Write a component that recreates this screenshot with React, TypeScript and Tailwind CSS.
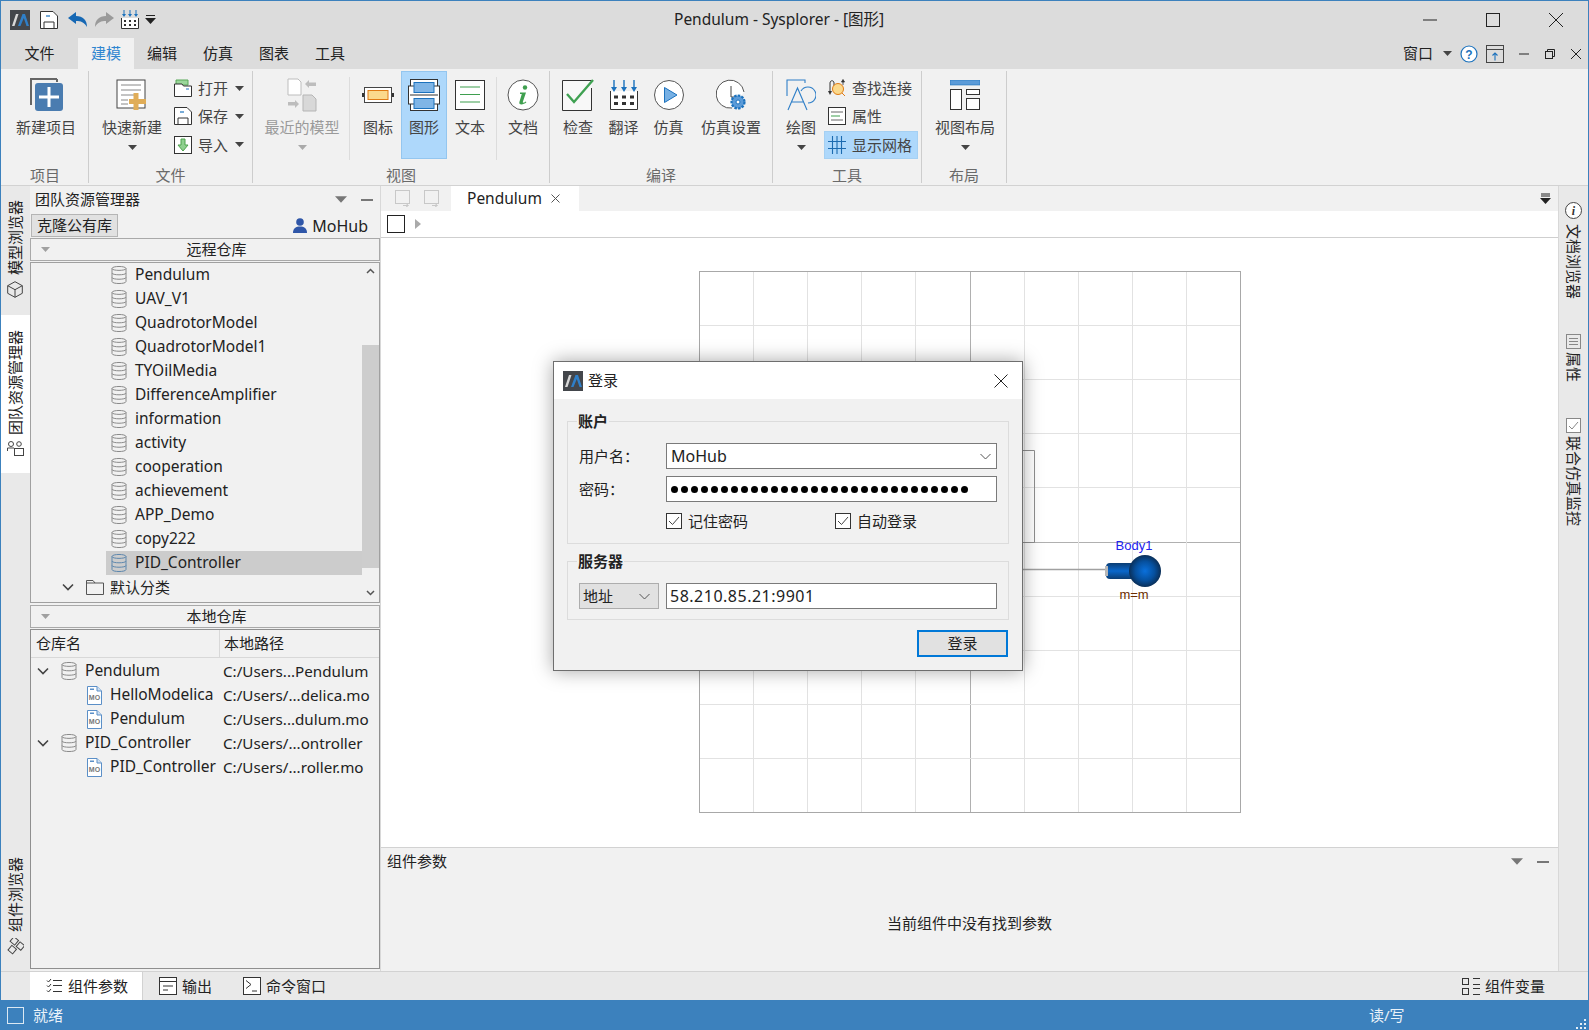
import type { ReactNode } from "react";

const DB_REMOTE = ["Pendulum", "UAV_V1", "QuadrotorModel", "QuadrotorModel1", "TYOilMedia", "DifferenceAmplifier", "information", "activity", "cooperation", "achievement", "APP_Demo", "copy222", "PID_Controller"];

const LOCAL_ROWS = [
  { name: "Pendulum", path: "C:/Users...Pendulum", root: true },
  { name: "HelloModelica", path: "C:/Users/...delica.mo", root: false },
  { name: "Pendulum", path: "C:/Users...dulum.mo", root: false },
  { name: "PID_Controller", path: "C:/Users/...ontroller", root: true },
  { name: "PID_Controller", path: "C:/Users/...roller.mo", root: false },
];

const VERT_UP = "[writing-mode:vertical-rl] [text-orientation:sideways] rotate-180 leading-none";
const VERT_DOWN = "[writing-mode:vertical-rl] [text-orientation:sideways] leading-none";

function Logo({ size = 20 }: { size?: number }) {
  return (
    <svg width={size} height={size} viewBox="0 0 20 20" className="shrink-0">
      <rect width="20" height="20" fill="#43464b" />
      <path d="M2 16 L6 4 H8.5 L4.5 16Z" fill="#d8d8d8" />
      <path d="M8 16 L12.5 4 H15 L19 16 H16.5 L13.8 8 L10.5 16Z" fill="#2f7fc8" />
    </svg>
  );
}

function Caret({ color = "#444", wide }: { color?: string; wide?: boolean }) {
  return (
    <svg width={wide ? 12 : 9} height={wide ? 7 : 5} viewBox="0 0 9 5" className="shrink-0"><path d="M0 0H9L4.5 5Z" fill={color} /></svg>
  );
}

function Db({ color = "#8a8a8a", fill = "#f1f1f1" }: { color?: string; fill?: string }) {
  return (
    <svg width="16" height="20" viewBox="0 0 16 20" className="shrink-0">
      <g fill={fill} stroke={color} strokeWidth="1">
        <path d="M1 3.5 C1 .8 15 .8 15 3.5 V16.5 C15 19.2 1 19.2 1 16.5Z" />
        <path d="M1 3.5 C1 6 15 6 15 3.5" fill="none" />
        <path d="M1 8 C1 10.4 15 10.4 15 8" fill="none" />
        <path d="M1 12.5 C1 14.8 15 14.8 15 12.5" fill="none" />
      </g>
    </svg>
  );
}

function MoFile() {
  return (
    <svg width="15" height="19" viewBox="0 0 15 19" className="shrink-0">
      <path d="M.5.5H10L14.5 5V18.5H.5Z" fill="#fff" stroke="#5b8fc7" />
      <path d="M10 .5V5H14.5" fill="#cfe0f2" stroke="#5b8fc7" />
      <rect x="3" y="2.5" width="4" height="1.5" fill="#5b8fc7" />
      <text x="7.5" y="14" fontSize="7" fontWeight="700" textAnchor="middle" fill="#777" fontFamily="Liberation Sans, sans-serif">MO</text>
    </svg>
  );
}

function Chevron() {
  return (
    <svg width="12" height="8" viewBox="0 0 12 8" className="shrink-0"><path d="M1 1.5L6 6.5L11 1.5" fill="none" stroke="#444" strokeWidth="1.6" /></svg>
  );
}

function RibbonBtn({ width, label, icon, caret, active, muted }: { width: number; label: string; icon: ReactNode; caret?: boolean; active?: boolean; muted?: boolean }) {
  return (
    <div
      className={`flex flex-col items-center h-[88px] shrink-0 border ${active ? "bg-[#aed8fb] border-[#94c6ef]" : "border-transparent"}`}
      style={{ width }}
    >
      <div className="h-[45px] flex items-center justify-center">{icon}</div>
      <div className={`h-[20px] leading-[20px] whitespace-nowrap ${muted ? "text-[#9a9a9a]" : "text-[#444]"}`}>{label}</div>
      {caret && (
        <div className="h-[20px] flex items-center justify-center">
          <Caret color={muted ? "#aaa" : "#444"} />
        </div>
      )}
    </div>
  );
}

function SmallBtn({ icon, label, caret, active }: { icon: ReactNode; label: string; caret?: boolean; active?: boolean }) {
  return (
    <div className={`flex items-center h-[29px] pl-[3px] border ${active ? "bg-[#aed8fb] border-[#a5d0f3]" : "border-transparent"}`}>
      <div className="w-[18px] flex justify-center shrink-0">{icon}</div>
      <span className="ml-[6px] text-[#444] whitespace-nowrap">{label}</span>
      {caret && <span className="ml-[7px]"><Caret /></span>}
    </div>
  );
}

function RibbonGroup({ width, label, children }: { width: number; label: string; children: ReactNode }) {
  return (
    <div className="flex flex-col shrink-0 border-r border-[#cdcdcd] my-[2px]" style={{ width }}>
      <div className="h-[88px] flex">{children}</div>
      <div className="flex-1 flex items-center justify-center pt-[5px] text-[#6a6a6a]">{label}</div>
    </div>
  );
}

function VSep() {
  return <div className="w-px h-[83px] mt-[6px] bg-[#dcdcdc] shrink-0" />;
}

function Ribbon() {
  return (
    <div className="h-[117px] bg-[#f1f1f1] border-b border-[#d2d2d2] flex pl-px shrink-0">
      <RibbonGroup width={87} label="项目">
        <div className="pl-[14px]">
          <RibbonBtn
            width={60}
            label="新建项目"
            icon={
              <svg width="36" height="36" viewBox="0 0 36 36">
                <path d="M3 28V2H29" fill="none" stroke="#666" strokeWidth="2" />
                <path d="M29 2V5" stroke="#666" strokeWidth="2" />
                <rect x="7" y="6" width="28" height="28" rx="3" fill="#4a7cb0" />
                <path d="M21 10V30M11 20H31" stroke="#fff" strokeWidth="3" />
              </svg>
            }
          />
        </div>
      </RibbonGroup>
      <RibbonGroup width={164} label="文件">
        <div className="pl-[13px]">
          <RibbonBtn
            width={60}
            label="快速新建"
            caret
            icon={
              <svg width="32" height="32" viewBox="0 0 32 32">
                <rect x="1" y="1" width="28" height="28" fill="#fff" stroke="#444" />
                <path d="M5 6H25M5 11H25M5 16H22M5 21H12M5 25H12" stroke="#888" />
                <path d="M20 14V31M13 22.5H30" stroke="#e0ad58" strokeWidth="5" />
              </svg>
            }
          />
        </div>
        <div className="pl-[8px] flex flex-col pt-[3px]">
          <SmallBtn
            caret
            label="打开"
            icon={
              <svg width="18" height="18" viewBox="0 0 18 18">
                <path d="M2 1H14V6H2Z" fill="#9ad69a" stroke="#58a858" />
                <path d="M.5 5H8L9.5 7H17.5V17.5H.5Z" fill="#fff" stroke="#333" />
                <path d="M12 10H15" stroke="#1c72bd" />
              </svg>
            }
          />
          <SmallBtn
            caret
            label="保存"
            icon={
              <svg width="18" height="18" viewBox="0 0 18 18">
                <path d="M.5.5H13L17.5 5V17.5H.5Z" fill="#fff" stroke="#333" />
                <path d="M4 17V11H14V17" fill="none" stroke="#333" />
                <path d="M6 5H10" stroke="#1c72bd" strokeWidth="1.2" />
              </svg>
            }
          />
          <SmallBtn
            caret
            label="导入"
            icon={
              <svg width="18" height="18" viewBox="0 0 18 18">
                <rect x=".5" y=".5" width="17" height="17" fill="#fff" stroke="#333" />
                <path d="M7 3H11V9H14L9 15L4 9H7Z" fill="#8fd08f" stroke="#4da24d" />
              </svg>
            }
          />
        </div>
      </RibbonGroup>
      <RibbonGroup width={297} label="视图">
        <div className="pl-[9px]">
          <RibbonBtn
            width={80}
            label="最近的模型"
            caret
            muted
            icon={
              <svg width="30" height="34" viewBox="0 0 30 34">
                <path d="M1 1H11L14 4V17H1Z" fill="#fff" stroke="#bdbdbd" />
                <path d="M16 17H25L29 21V33H16Z" fill="#d8d8d8" stroke="#b5b5b5" />
                <path d="M18 6L22 2V4.5H29V8H22V10Z" fill="#bdbdbd" />
                <path d="M12 26L8 30V27.5H1V24H8V22Z" fill="#bdbdbd" />
              </svg>
            }
          />
        </div>
        <div className="w-[7px]" />
        <VSep />
        <div className="w-[8px]" />
        <RibbonBtn
          width={40}
          label="图标"
          icon={
            <svg width="32" height="16" viewBox="0 0 32 16">
              <rect x="0" y="6" width="3" height="4" fill="#333" />
              <rect x="29" y="6" width="3" height="4" fill="#333" />
              <rect x="2.5" y=".5" width="27" height="15" fill="#fff" stroke="#444" />
              <rect x="6" y="3.5" width="20" height="9" fill="#fbd98c" stroke="#e07b14" />
            </svg>
          }
        />
        <div className="w-[3px]" />
        <RibbonBtn
          width={46}
          active
          label="图形"
          icon={
            <svg width="32" height="32" viewBox="0 0 32 32">
              <rect x="2.5" y=".5" width="27" height="31" fill="#fff" stroke="#333" />
              <rect x=".5" y="7" width="31" height="18" fill="#fff" stroke="#333" />
              <rect x="6" y="3.5" width="20" height="10" fill="#7fb5e6" stroke="#1c72bd" />
              <rect x="6" y="19.5" width="20" height="10" fill="#7fb5e6" stroke="#1c72bd" />
              <path d="M2 16H30" stroke="#333" />
            </svg>
          }
        />
        <div className="w-[2px]" />
        <RibbonBtn
          width={42}
          label="文本"
          icon={
            <svg width="30" height="30" viewBox="0 0 30 30">
              <rect x=".5" y=".5" width="29" height="29" fill="#fff" stroke="#333" />
              <path d="M5 7H25M5 14.5H25M5 22H25" stroke="#3f9f4f" strokeWidth="1.2" />
            </svg>
          }
        />
        <div className="w-[5px]" />
        <VSep />
        <div className="w-[5px]" />
        <RibbonBtn
          width={42}
          label="文档"
          icon={
            <svg width="32" height="32" viewBox="0 0 32 32">
              <circle cx="16" cy="16" r="15" fill="#fff" stroke="#555" />
              <circle cx="18" cy="8.5" r="2.2" fill="#3f9f4f" />
              <path d="M13 13.5H19L15.8 23C15.6 24 16.8 24 18.8 22.5L19.4 23.3C16.5 26 11.5 26.5 12.4 23L14.8 15H13Z" fill="#3f9f4f" />
            </svg>
          }
        />
      </RibbonGroup>
      <RibbonGroup width={223} label="编译">
        <div className="pl-[6px] flex">
          <RibbonBtn
            width={44}
            label="检查"
            icon={
              <svg width="32" height="32" viewBox="0 0 32 32">
                <path d="M29.5 9V31.5H.5V1.5H29.5" fill="#f8f8f8" stroke="#333" />
                <path d="M5 15L12 23L31 1" fill="none" stroke="#3fa152" strokeWidth="2.4" />
              </svg>
            }
          />
          <div className="w-px" />
          <RibbonBtn
            width={45}
            label="翻译"
            icon={
              <svg width="28" height="30" viewBox="0 0 28 30">
                <path d="M.5 11V29.5H27.5V11" fill="#fff" stroke="#333" />
                <path d="M4 0V8M14 0V8M24 0V8" stroke="#1c72bd" strokeWidth="1.4" />
                <path d="M1 7H7L4 12ZM11 7H17L14 12ZM21 7H27L24 12Z" fill="#1c72bd" />
                <path d="M4 15.5H8V18.5H4ZM12 15.5H16V18.5H12ZM20 15.5H24V18.5H20ZM4 22H8V25H4ZM12 22H16V25H12ZM20 22H24V25H20Z" fill="#333" />
              </svg>
            }
          />
          <RibbonBtn
            width={45}
            label="仿真"
            icon={
              <svg width="30" height="30" viewBox="0 0 30 30">
                <circle cx="15" cy="15" r="14.5" fill="#fff" stroke="#555" />
                <path d="M10.5 7.5L23 15L10.5 22.5Z" fill="#76b0e4" stroke="#1c72bd" />
              </svg>
            }
          />
          <div className="w-[4px]" />
          <RibbonBtn
            width={72}
            label="仿真设置"
            icon={
              <svg width="30" height="32" viewBox="0 0 30 32">
                <path d="M28 13A14 14 0 1 0 16 29" fill="#fff" stroke="#555" />
                <path d="M15 7V18H21" fill="none" stroke="#444" />
                <circle cx="22" cy="23" r="6.5" fill="#5b9bd8" stroke="#1c72bd" strokeWidth="2.2" strokeDasharray="2.5 1.2" />
                <circle cx="22" cy="23" r="2" fill="#fff" stroke="#1c72bd" />
              </svg>
            }
          />
        </div>
      </RibbonGroup>
      <RibbonGroup width={149} label="工具">
        <div className="pl-[9px]">
          <RibbonBtn
            width={38}
            label="绘图"
            caret
            icon={
              <svg width="30" height="32" viewBox="0 0 30 32">
                <g fill="none" stroke="#2f7fc8" strokeWidth="1.1">
                  <path d="M1 17V1H19V4" />
                  <path d="M2 31L11.5 9L21 31M5.5 23H17.5" />
                  <path d="M15 12A8 8 0 1 1 22 24" />
                </g>
              </svg>
            }
          />
        </div>
        <div className="w-[94px] ml-[4px] flex flex-col pt-[3px] shrink-0">
          <SmallBtn
            label="查找连接"
            icon={
              <svg width="18" height="18" viewBox="0 0 18 18">
                <path d="M2 14V4C2 1 6 1 6 4V7" fill="none" stroke="#333" />
                <path d="M0 12L2 16L4 12Z" fill="#333" />
                <circle cx="10" cy="10" r="5.5" fill="#fbd98c" stroke="#e07b14" />
                <path d="M14 14L17 17" stroke="#e07b14" />
                <path d="M15 6V2M13.5 3L15 .5L16.5 3Z" fill="#333" stroke="#333" strokeWidth=".8" />
              </svg>
            }
          />
          <SmallBtn
            label="属性"
            icon={
              <svg width="18" height="18" viewBox="0 0 18 18">
                <rect x=".5" y=".5" width="17" height="17" fill="#fff" stroke="#333" />
                <path d="M3 5H15M3 13H15" stroke="#666" />
                <path d="M3 9H12" stroke="#3f9f4f" />
              </svg>
            }
          />
          <SmallBtn
            active
            label="显示网格"
            icon={
              <svg width="18" height="18" viewBox="0 0 18 18">
                <path d="M0 5.5H18M0 12.5H18M4.5 0V18M13.5 0V18M9 0V18" fill="none" stroke="#1c6bb0" strokeWidth="1.1" />
              </svg>
            }
          />
        </div>
      </RibbonGroup>
      <RibbonGroup width={85} label="布局">
        <div className="pl-[13px]">
          <RibbonBtn
            width={60}
            label="视图布局"
            caret
            icon={
              <svg width="30" height="30" viewBox="0 0 30 30">
                <rect x="0" y="0" width="30" height="5" fill="#5b9bd8" stroke="#1c72bd" strokeWidth=".6" />
                <rect x=".5" y="9.5" width="11" height="20" fill="#fff" stroke="#333" />
                <rect x="16.5" y="9.5" width="13" height="5" fill="#fff" stroke="#333" />
                <rect x="16.5" y="18.5" width="13" height="11" fill="#fff" stroke="#333" />
              </svg>
            }
          />
        </div>
      </RibbonGroup>
    </div>
  );
}

function TitleBar() {
  return (
    <div className="h-[37px] flex items-center shrink-0 relative">
      <div className="ml-[9px]"><Logo /></div>
      <div className="ml-[10px]">
        <svg width="18" height="18" viewBox="0 0 18 18">
          <path d="M.5.5H13L17.5 5V17.5H.5Z" fill="#fff" stroke="#333" />
          <path d="M4 17V11H14V17" fill="none" stroke="#333" />
          <path d="M6 5H10" stroke="#1c72bd" strokeWidth="1.2" />
        </svg>
      </div>
      <div className="ml-[10px]">
        <svg width="19" height="15" viewBox="0 0 19 15"><path d="M0 6L8 0V4C15 4 19 8 19 15C16 10 13 9 8 9V12Z" fill="#1668b4" /></svg>
      </div>
      <div className="ml-[8px]">
        <svg width="19" height="15" viewBox="0 0 19 15"><path d="M19 6L11 0V4C4 4 0 8 0 15C3 10 6 9 11 9V12Z" fill="#9a9a9a" /></svg>
      </div>
      <div className="ml-[7px]">
        <svg width="18" height="19" viewBox="0 0 18 19">
          <path d="M.5 8V18.5H17.5V8" fill="#fff" stroke="#333" />
          <path d="M3 0V5M9 0V5M15 0V5" stroke="#1c72bd" />
          <path d="M1 4H5L3 7ZM7 4H11L9 7ZM13 4H17L15 7Z" fill="#1c72bd" />
          <path d="M3 10H5V12H3ZM8 10H10V12H8ZM13 10H15V12H13ZM3 14H5V16H3ZM8 14H10V16H8ZM13 14H15V16H13Z" fill="#333" />
        </svg>
      </div>
      <div className="ml-[6px]">
        <svg width="11" height="9" viewBox="0 0 11 9"><path d="M1 .5H10" stroke="#222" /><path d="M0 3H11L5.5 9Z" fill="#222" /></svg>
      </div>
      <div className="ml-[518px] text-[15.5px] text-[#222] whitespace-nowrap">Pendulum - Sysplorer - [图形]</div>
      <div className="ml-auto flex items-center pr-[25px] gap-[49px]">
        <svg width="14" height="14" viewBox="0 0 14 14"><path d="M0 7H14" stroke="#222" /></svg>
        <svg width="14" height="14" viewBox="0 0 14 14"><rect x=".5" y=".5" width="13" height="13" fill="none" stroke="#222" /></svg>
        <svg width="14" height="14" viewBox="0 0 14 14"><path d="M0 0L14 14M14 0L0 14" stroke="#222" /></svg>
      </div>
    </div>
  );
}

function MenuRow() {
  return (
    <div className="h-[31px] flex items-stretch shrink-0">
      <div className="ml-[11px] w-[55px] flex items-center justify-center text-[#222]">文件</div>
      <div className="ml-[11px] w-[56px] flex items-center justify-center bg-[#f1f1f1] text-[#2f86d0]">建模</div>
      {["编辑", "仿真", "图表", "工具"].map((m) => (
        <div key={m} className="w-[56px] flex items-center justify-center text-[#222]">{m}</div>
      ))}
      <div className="ml-auto flex items-center pr-[7px]">
        <span className="text-[#222]">窗口</span>
        <span className="ml-[10px]"><Caret /></span>
        <div className="ml-[8px]">
          <svg width="18" height="18" viewBox="0 0 18 18">
            <circle cx="9" cy="9" r="8" fill="#fff" stroke="#1c72bd" strokeWidth="1.2" />
            <text x="9" y="13.5" fontSize="12" fontWeight="700" textAnchor="middle" fill="#1c72bd" fontFamily="Liberation Sans, sans-serif">?</text>
          </svg>
        </div>
        <div className="ml-[8px]">
          <svg width="18" height="18" viewBox="0 0 18 18">
            <rect x=".5" y=".5" width="17" height="17" fill="none" stroke="#444" />
            <path d="M0 4.5H18" stroke="#444" />
            <path d="M9 15.5V8M6.5 10.5L9 8L11.5 10.5" fill="none" stroke="#1c72bd" strokeWidth="1.1" />
          </svg>
        </div>
        <div className="ml-[15px]">
          <svg width="10" height="10" viewBox="0 0 10 10"><path d="M0 5H10" stroke="#222" /></svg>
        </div>
        <div className="ml-[16px]">
          <svg width="10" height="10" viewBox="0 0 10 10"><path d="M2.5 2.5V.5H9.5V7.5H7.5" fill="none" stroke="#222" /><rect x=".5" y="2.5" width="7" height="7" fill="none" stroke="#222" /></svg>
        </div>
        <div className="ml-[16px]">
          <svg width="10" height="10" viewBox="0 0 10 10"><path d="M0 0L10 10M10 0L0 10" stroke="#222" /></svg>
        </div>
      </div>
    </div>
  );
}

function LeftStrip() {
  return (
    <div className="w-[29px] shrink-0 flex flex-col bg-[#e9e9e9] text-[#222] border-r border-[#e9e9e9]">
      <div className="h-[129px] flex flex-col items-center justify-end pb-[17px]">
        <span className={VERT_UP}>模型浏览器</span>
        <svg width="16" height="17" viewBox="0 0 16 17" className="mt-[6px]">
          <path d="M8 .7L15.3 4.7V12.3L8 16.3L.7 12.3V4.7ZM.7 4.7L8 8.7L15.3 4.7M8 8.7V16.3" fill="none" stroke="#444" />
        </svg>
      </div>
      <div className="h-[158px] bg-white flex flex-col items-center justify-end pb-[17px] w-[29px]">
        <span className={VERT_UP}>团队资源管理器</span>
        <svg width="17" height="16" viewBox="0 0 17 16" className="mt-[5px]">
          <circle cx="4" cy="4" r="2.5" fill="none" stroke="#444" />
          <path d="M.5 11V8H7" fill="none" stroke="#444" />
          <circle cx="12" cy="4" r="2.3" fill="none" stroke="#444" />
          <rect x="7.5" y="8.5" width="9" height="7" fill="#fff" stroke="#444" />
        </svg>
      </div>
      <div className="flex-1 flex flex-col items-center justify-end pb-[16px]">
        <span className={VERT_UP}>组件浏览器</span>
        <svg width="17" height="17" viewBox="0 0 17 17" className="mt-[6px]">
          <g fill="none" stroke="#444" transform="rotate(40 8.5 8.5)">
            <rect x="1" y="2" width="6" height="6" />
            <rect x="9" y="2" width="6" height="6" />
            <rect x="5" y="10" width="6" height="6" />
          </g>
        </svg>
      </div>
    </div>
  );
}

function SectionBar({ label }: { label: string }) {
  return (
    <div className="h-[23px] border border-[#a9a9a9] shrink-0 flex items-center relative">
      <span className="absolute left-[10px] top-[8px]"><Caret color="#a0a0a0" /></span>
      <span className="w-full text-center pl-[23px] text-[#222] leading-none">{label}</span>
    </div>
  );
}

function LeftPanel() {
  return (
    <div className="w-[351px] shrink-0 flex flex-col border-r border-[#d8d8d8] pb-[2px]">
      <div className="h-[27px] flex items-center pl-[5px] pr-[7px] shrink-0 text-[#222]">
        <span>团队资源管理器</span>
        <span className="ml-auto"><Caret color="#777" wide /></span>
        <span className="ml-[14px] w-[12px] h-[2px] bg-[#777]" />
      </div>
      <div className="h-[25px] flex items-center pl-px pr-[12px] shrink-0">
        <div className="h-[23px] w-[87px] bg-[#e1e1e1] border border-[#b5b5b5] flex items-center justify-center text-[#222]">克隆公有库</div>
        <svg width="14" height="15" viewBox="0 0 14 15" className="ml-auto">
          <circle cx="7" cy="4" r="3.8" fill="#2f56a8" />
          <path d="M0 15C0 10 3 8.5 7 8.5C11 8.5 14 10 14 15Z" fill="#2f56a8" />
        </svg>
        <span className="ml-[5px] text-[16px] text-[#222]">MoHub</span>
      </div>
      <SectionBar label="远程仓库" />
      <div className="h-[341px] mt-px border border-[#a0a0a0] flex overflow-hidden shrink-0">
        <div className="flex-1 overflow-hidden">
          {DB_REMOTE.map((n, i) => {
            const sel = n === "PID_Controller";
            return (
              <div key={`${n}${i}`} className={`h-[24px] ml-[75px] flex items-center pl-[5px] text-[#222] ${sel ? "bg-[#cccccc]" : ""}`}>
                <Db color={sel ? "#5d87ad" : "#8a8a8a"} fill={sel ? "#cccccc" : "#f1f1f1"} />
                <span className="ml-[8px] text-[15.5px]">{n}</span>
              </div>
            );
          })}
          <div className="h-[24px] flex items-center pl-[31px] text-[#222]">
            <Chevron />
            <svg width="18" height="15" viewBox="0 0 18 15" className="ml-[12px]"><path d="M.5 14.5V.5H7L9 3H17.5V14.5Z" fill="#f1f1f1" stroke="#555" /><path d="M.5 3H9" stroke="#555" /></svg>
            <span className="ml-[6px]">默认分类</span>
          </div>
          <div className="h-[24px] ml-[75px] pl-[5px] pt-[2px]"><Db /></div>
        </div>
        <div className="w-[17px] shrink-0 flex flex-col items-center">
          <div className="h-[82px] w-full pt-[5px] flex justify-center shrink-0">
            <svg width="9" height="6" viewBox="0 0 9 6"><path d="M1 5L4.5 1.5L8 5" fill="none" stroke="#555" strokeWidth="1.5" /></svg>
          </div>
          <div className="h-[223px] w-full bg-[#cdcdcd] shrink-0" />
          <div className="flex-1 flex items-end pb-[6px]">
            <svg width="9" height="6" viewBox="0 0 9 6"><path d="M1 1L4.5 4.5L8 1" fill="none" stroke="#555" strokeWidth="1.5" /></svg>
          </div>
        </div>
      </div>
      <div className="mt-[2px]"><SectionBar label="本地仓库" /></div>
      <div className="flex-1 mt-px border border-[#8f8f8f] flex flex-col overflow-hidden">
        <div className="h-[28px] flex shrink-0 border-b border-[#d8d8d8] text-[#222]">
          <div className="w-[189px] border-r border-[#d8d8d8] pl-[5px] flex items-center">仓库名</div>
          <div className="pl-[4px] flex items-center">本地路径</div>
        </div>
        <div className="pt-px">
          {LOCAL_ROWS.map((r, i) => (
            <div key={i} className="h-[24px] flex items-center text-[#222]">
              <div className="w-[189px] shrink-0 flex items-center overflow-hidden whitespace-nowrap text-[15.5px]">
                {r.root ? (
                  <>
                    <span className="ml-[6px]"><Chevron /></span>
                    <span className="ml-[12px]"><Db /></span>
                    <span className="ml-[8px]">{r.name}</span>
                  </>
                ) : (
                  <>
                    <span className="ml-[56px]"><MoFile /></span>
                    <span className="ml-[8px]">{r.name}</span>
                  </>
                )}
              </div>
              <div className="pl-[3px] whitespace-nowrap text-[15.2px]">{r.path}</div>
            </div>
          ))}
        </div>
      </div>
    </div>
  );
}

function Canvas() {
  const xs = Array.from({ length: 11 }, (_, i) => i * 54.1);
  return (
    <div className="flex-1 bg-white relative overflow-hidden">
      <svg width="560" height="560" viewBox="0 0 560 560" className="absolute left-[318px] top-[33px]">
        <defs>
          <radialGradient id="ball" cx="50%" cy="50%" r="50%">
            <stop offset="0%" stopColor="#0a70dc" />
            <stop offset="60%" stopColor="#06509e" />
            <stop offset="100%" stopColor="#0a2f58" />
          </radialGradient>
          <linearGradient id="cyl" x1="0" y1="0" x2="0" y2="1">
            <stop offset="0%" stopColor="#0b3d73" />
            <stop offset="50%" stopColor="#0a68cc" />
            <stop offset="100%" stopColor="#0b3d73" />
          </linearGradient>
        </defs>
        {xs.map((v, i) => (
          <g key={i} stroke={i === 5 ? "#b0b0b0" : "#e2e2e2"}>
            <path d={`M${Math.round(v) + 0.5} 0.5V541.5`} />
            <path d={`M0.5 ${Math.round(v) + 0.5}H541.5`} />
          </g>
        ))}
        <rect x="0.5" y="0.5" width="541" height="541" fill="none" stroke="#a8a8a8" />
        <path d="M300 179.5H335.5V271.5H300" fill="none" stroke="#8f8f8f" />
        <path d="M300 298.5H407" stroke="#a0a0a0" strokeWidth="1.5" />
        <rect x="407" y="292" width="30" height="16" rx="4" fill="url(#cyl)" />
        <rect x="406" y="295" width="3" height="10" fill="#b8b8b8" />
        <circle cx="446" cy="300" r="16" fill="url(#ball)" />
        <text x="435" y="279" fontSize="13" textAnchor="middle" fill="#2222ee" fontFamily="Liberation Sans, sans-serif">Body1</text>
        <text x="435" y="328" fontSize="13" textAnchor="middle" fill="#6b2d00" fontFamily="Liberation Sans, sans-serif">m=m</text>
      </svg>
    </div>
  );
}

function CenterArea() {
  return (
    <div className="flex-1 min-w-0 flex flex-col">
      <div className="h-[25px] flex items-stretch shrink-0 pl-[13px] pr-[7px]">
        <div className="flex items-center gap-[12px] text-[#c4c4c4]">
          {[0, 1].map((i) => (
            <svg key={i} width="17" height="17" viewBox="0 0 17 17">
              <rect x="1.5" y=".5" width="14" height="13" fill="none" stroke="#c8c8c8" />
              <path d="M9 15.5H14M12 13.5L14.5 15.5L12 17" fill="none" stroke="#c8c8c8" />
            </svg>
          ))}
        </div>
        <div className="ml-[11px] w-[128px] bg-white flex items-center pl-[16px] text-[#222]">
          <span className="text-[15.5px]">Pendulum</span>
          <svg width="9" height="9" viewBox="0 0 9 9" className="ml-[9px]"><path d="M.5.5L8.5 8.5M8.5.5L.5 8.5" stroke="#555" /></svg>
        </div>
        <div className="ml-auto flex items-center">
          <svg width="11" height="11" viewBox="0 0 11 11"><path d="M1 1H10M1 3H10" stroke="#222" /><path d="M0 5H11L5.5 11Z" fill="#222" /></svg>
        </div>
      </div>
      <div className="h-[27px] bg-white border-b border-[#cfcfcf] flex items-center pl-[6px] shrink-0">
        <div className="w-[18px] h-[18px] border border-[#222] bg-white" />
        <svg width="6" height="10" viewBox="0 0 6 10" className="ml-[10px]"><path d="M0 0L6 5L0 10Z" fill="#aaa" /></svg>
      </div>
      <Canvas />
      <div className="h-[124px] border-t border-[#d2d2d2] shrink-0 flex flex-col">
        <div className="h-[27px] flex items-center pl-[6px] pr-[9px] text-[#222] shrink-0">
          <span>组件参数</span>
          <span className="ml-auto"><Caret color="#777" wide /></span>
          <span className="ml-[14px] w-[12px] h-[2px] bg-[#777]" />
        </div>
        <div className="flex-1 flex items-center justify-center text-[#222]">当前组件中没有找到参数</div>
      </div>
    </div>
  );
}

function RightStrip() {
  return (
    <div className="w-[30px] shrink-0 bg-[#e9e9e9] border-l border-[#d8d8d8] flex flex-col items-center text-[#222]">
      <svg width="17" height="17" viewBox="0 0 17 17" className="mt-[16px]">
        <circle cx="8.5" cy="8.5" r="8" fill="#fff" stroke="#444" />
        <text x="8.5" y="13" fontSize="12" fontStyle="italic" fontWeight="700" textAnchor="middle" fill="#333" fontFamily="Liberation Serif, serif">i</text>
      </svg>
      <span className={`${VERT_DOWN} mt-[5px]`}>文档浏览器</span>
      <svg width="15" height="15" viewBox="0 0 15 15" className="mt-[35px]">
        <rect x=".5" y=".5" width="14" height="14" fill="none" stroke="#888" />
        <path d="M3 4.5H12M3 7.5H12M3 10.5H12" stroke="#888" />
      </svg>
      <span className={`${VERT_DOWN} mt-[3px]`}>属性</span>
      <svg width="15" height="15" viewBox="0 0 15 15" className="mt-[36px]">
        <rect x=".5" y=".5" width="14" height="14" fill="#fff" stroke="#888" />
        <path d="M3 8L6 11L12 4" fill="none" stroke="#888" />
      </svg>
      <span className={`${VERT_DOWN} mt-[3px]`}>联合仿真监控</span>
    </div>
  );
}

function BottomTabs() {
  return (
    <div className="h-[29px] bg-[#e9e9e9] border-t border-[#d2d2d2] flex items-stretch shrink-0 text-[#222]">
      <div className="ml-[29px] w-[113px] bg-white border-r border-[#d2d2d2] flex items-center pl-[16px]">
        <svg width="16" height="16" viewBox="0 0 16 16">
          <path d="M1 2.5L2.5 4L5 1M1 7.5L2.5 9L5 6M1 12.5L2.5 14L5 11" fill="none" stroke="#333" />
          <path d="M7 2.5H16M7 7.5H16M7 13.5H16" stroke="#333" />
        </svg>
        <span className="ml-[6px]">组件参数</span>
      </div>
      <div className="ml-[16px] flex items-center">
        <svg width="18" height="18" viewBox="0 0 18 18">
          <rect x=".5" y=".5" width="17" height="17" fill="#fff" stroke="#333" />
          <path d="M0 4.5H18M4 9H14M4 13H9" stroke="#333" />
        </svg>
        <span className="ml-[5px]">输出</span>
      </div>
      <div className="ml-[31px] flex items-center">
        <svg width="18" height="18" viewBox="0 0 18 18">
          <rect x=".5" y=".5" width="17" height="17" fill="#fff" stroke="#333" />
          <path d="M3 3.5L8 7.5L3 11.5M9 14H14" fill="none" stroke="#333" />
        </svg>
        <span className="ml-[5px]">命令窗口</span>
      </div>
      <div className="ml-auto mr-[43px] flex items-center">
        <svg width="18" height="18" viewBox="0 0 18 18">
          <rect x=".5" y="1.5" width="6" height="6" fill="none" stroke="#333" />
          <rect x=".5" y="11.5" width="6" height="6" fill="none" stroke="#333" />
          <path d="M11 1.5H18M11 7.5H18M11 11.5H18M11 17.5H18" stroke="#333" />
        </svg>
        <span className="ml-[5px]">组件变量</span>
      </div>
    </div>
  );
}

function StatusBar() {
  return (
    <div className="h-[30px] bg-[#3c81bd] text-[#eaf2f9] flex items-center shrink-0 relative">
      <div className="ml-[6px] w-[17px] h-[17px] border border-[#dbe8f3]" />
      <span className="ml-[9px]">就绪</span>
      <span className="ml-[1306px]">读/写</span>
      <svg width="10" height="10" viewBox="0 0 10 10" className="absolute right-[2px] bottom-[1px]">
        <path d="M8 0H10V2H8ZM4 4H6V6H4ZM8 4H10V6H8ZM0 8H2V10H0ZM4 8H6V10H4ZM8 8H10V10H8Z" fill="#e6eff7" />
      </svg>
    </div>
  );
}

function CheckBox({ label }: { label: string }) {
  return (
    <div className="flex items-center">
      <div className="w-[16px] h-[16px] bg-white border border-[#333] flex items-center justify-center">
        <svg width="12" height="10" viewBox="0 0 12 10"><path d="M1 5L4.5 8.5L11 1" fill="none" stroke="#444" /></svg>
      </div>
      <span className="ml-[6px] text-[#222]">{label}</span>
    </div>
  );
}

function GroupBox({ label, height, children }: { label: string; height: number; children: ReactNode }) {
  return (
    <div className="border border-[#dcdcdc] relative" style={{ height }}>
      <span className="absolute left-[9px] top-[-12px] px-[1px] bg-[#f1f1f1] font-bold text-[#222] leading-[22px]">{label}</span>
      {children}
    </div>
  );
}

function LoginDialog() {
  return (
    <div className="absolute left-[553px] top-[361px] w-[470px] h-[310px] bg-[#f1f1f1] border border-[#6e6e6e] shadow-[0_0_18px_rgba(0,0,0,0.35)] flex flex-col">
      <div className="h-[37px] bg-white flex items-center pl-[9px] pr-[14px] shrink-0 text-[#222]">
        <Logo />
        <span className="ml-[5px]">登录</span>
        <svg width="14" height="14" viewBox="0 0 14 14" className="ml-auto"><path d="M.5.5L13.5 13.5M13.5.5L.5 13.5" stroke="#222" /></svg>
      </div>
      <div className="flex-1 px-[13px] pt-[22px] flex flex-col">
        <GroupBox label="账户" height={123}>
          <div className="pt-[21px] pl-[11px] pr-[11px] text-[#222]">
            <div className="flex items-center h-[26px]">
              <span className="w-[87px]">用户名：</span>
              <div className="flex-1 h-[26px] bg-white border border-[#7a7a7a] flex items-center pl-[4px] pr-[5px]">
                <span className="text-[16px]">MoHub</span>
                <span className="ml-auto"><svg width="11" height="7" viewBox="0 0 11 7"><path d="M.5 1L5.5 6L10.5 1" fill="none" stroke="#555" /></svg></span>
              </div>
            </div>
            <div className="flex items-center h-[26px] mt-[7px]">
              <span className="w-[87px]">密码：</span>
              <div className="flex-1 h-[26px] bg-white border border-[#7a7a7a] flex items-center pl-[4px] gap-[3px]">
                {Array.from({ length: 30 }, (_, i) => (
                  <span key={i} className="w-[7px] h-[7px] rounded-full bg-black" />
                ))}
              </div>
            </div>
            <div className="flex items-center h-[20px] mt-[9px] pl-[87px]">
              <div className="w-[169px]"><CheckBox label="记住密码" /></div>
              <CheckBox label="自动登录" />
            </div>
          </div>
        </GroupBox>
        <div className="mt-[17px]">
          <GroupBox label="服务器" height={59}>
            <div className="pt-[21px] pl-[11px] pr-[11px] flex text-[#222]">
              <div className="w-[80px] h-[26px] bg-[#e1e1e1] border border-[#adadad] flex items-center pl-[3px] pr-[8px]">
                <span>地址</span>
                <span className="ml-auto"><svg width="11" height="7" viewBox="0 0 11 7"><path d="M.5 1L5.5 6L10.5 1" fill="none" stroke="#555" /></svg></span>
              </div>
              <div className="ml-[7px] flex-1 h-[26px] bg-white border border-[#7a7a7a] flex items-center pl-[3px] text-[16px] tracking-[0.5px]">58.210.85.21:9901</div>
            </div>
          </GroupBox>
        </div>
        <div className="flex justify-end mt-[10px] pr-px">
          <div className="w-[91px] h-[27px] bg-[#e1e1e1] border-2 border-[#0078d7] flex items-center justify-center text-[#222]">登录</div>
        </div>
      </div>
    </div>
  );
}

export default function App() {
  return (
    <div className="w-[1589px] h-[1030px] relative overflow-hidden bg-[#f1f1f1] text-[15px] [font-family:'Noto_Sans','Noto_Sans_CJK_SC',sans-serif]">
      <div className="w-full h-full flex flex-col border-x border-t border-[#3c81bd]">
        <div className="bg-[#dcdcdc] shrink-0">
          <TitleBar />
          <MenuRow />
        </div>
        <Ribbon />
        <div className="flex-1 min-h-0 flex">
          <LeftStrip />
          <LeftPanel />
          <CenterArea />
          <RightStrip />
        </div>
        <BottomTabs />
        <StatusBar />
      </div>
      <LoginDialog />
    </div>
  );
}
